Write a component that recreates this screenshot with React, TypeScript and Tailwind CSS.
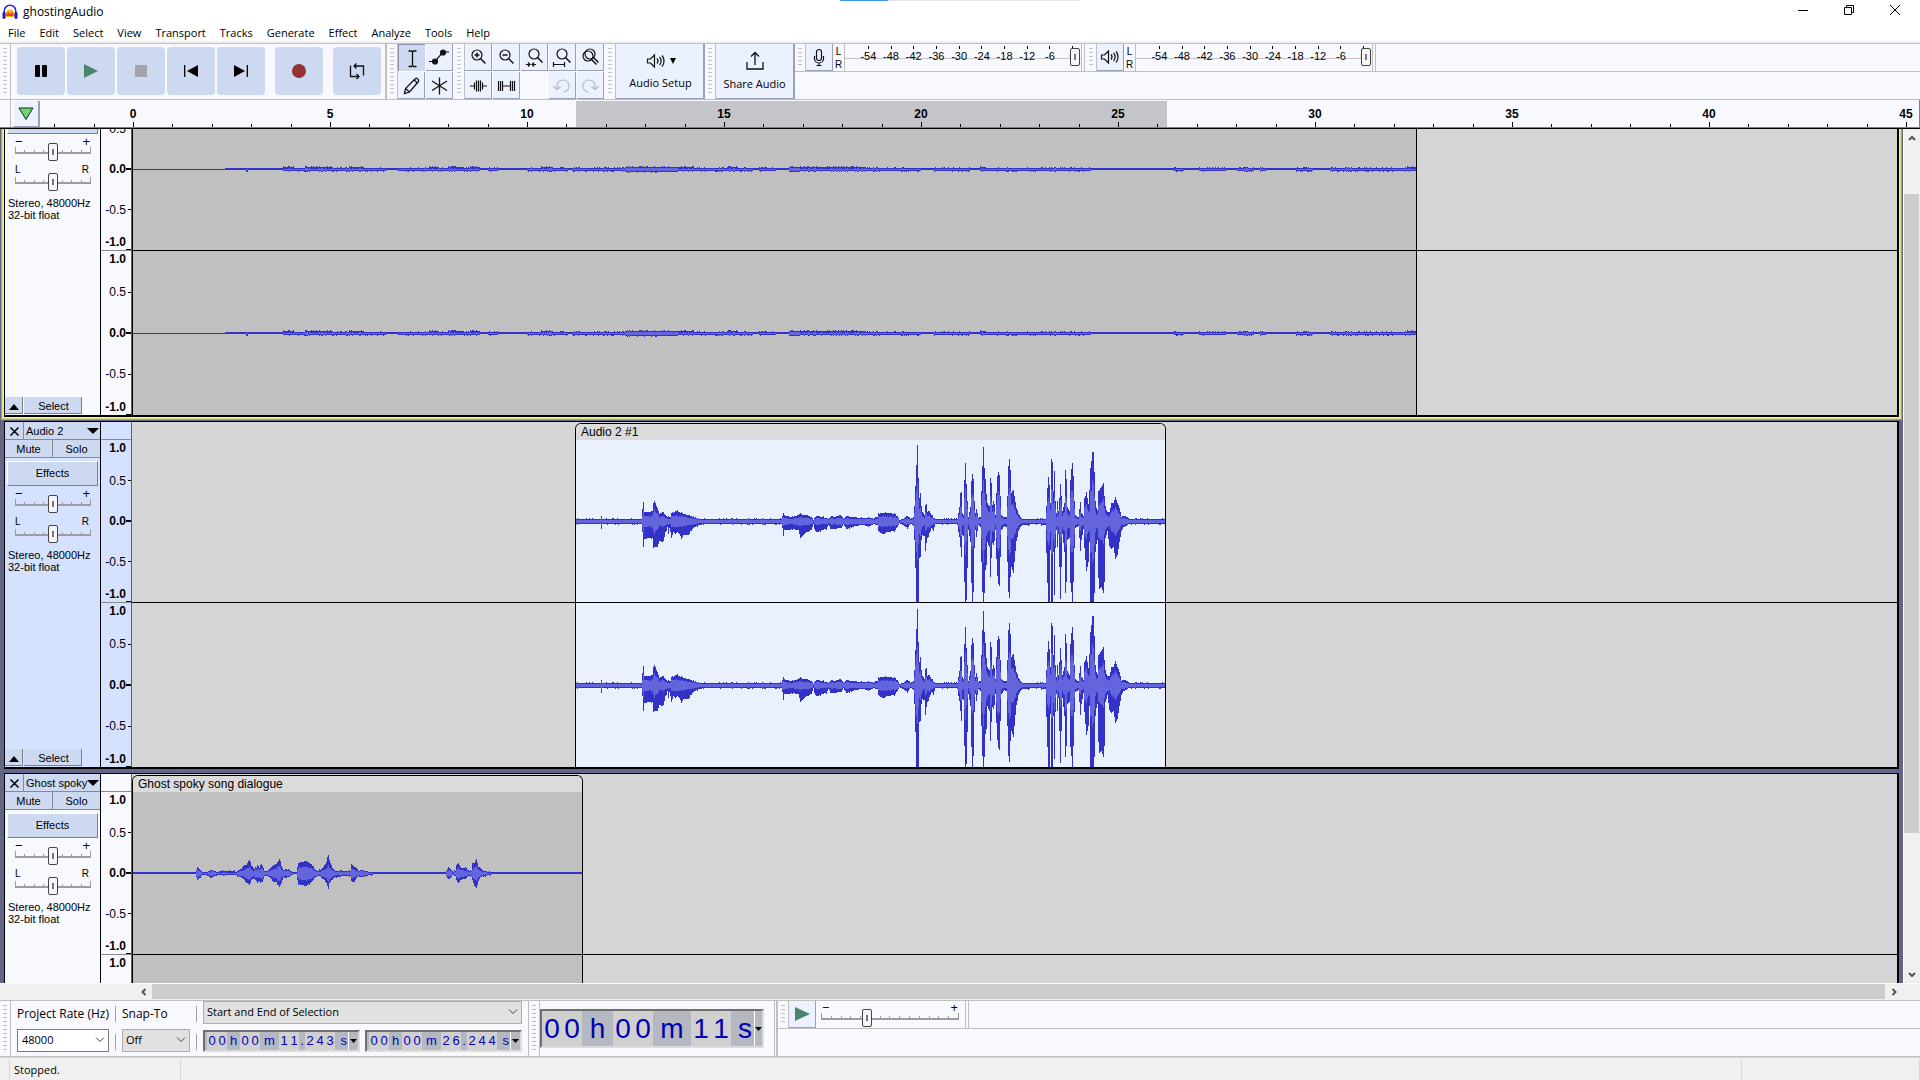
import { useMemo, useState } from "react";
import type { ReactNode } from "react";

const PX_PER_SEC = 39.4;
const MENUS = ["File", "Edit", "Select", "View", "Transport", "Tracks", "Generate", "Effect", "Analyze", "Tools", "Help"];
const DB_MARKS = [-54, -48, -42, -36, -30, -24, -18, -12, -6, 0];

// x offset, peak above centre, peak below centre
type Peak = [number, number, number];

const SPEECH: Peak[] = [
  [0,2,2],[24,2,2],[25,5,7],[26,2,2],[65,2,2],[66,12,10],[67,19,24],[68,9,17],[73,9,16],[76,10,16],[77,18,25],[78,20,25],[81,13,25],
  [83,7,18],[85,8,20],[87,9,19],[89,5,10],[91,4,5],[92,5,11],[93,4,6],[94,4,10],[95,8,16],[97,8,10],[99,10,12],[101,10,10],[104,8,13],
  [105,8,17],[107,7,13],[110,6,13],[112,6,12],[114,5,9],[118,3,5],[122,2,3],[128,2,2],[205,2,2],[206,5,6],[207,7,14],[208,5,8],[217,4,7],
  [222,6,8],[224,8,16],[226,6,13],[230,6,10],[235,4,8],[237,1,2],[239,4,9],[241,5,10],[245,4,8],[250,3,7],[252,2,3],[255,4,7],[265,5,6],
  [267,2,2],[270,5,7],[275,4,5],[285,3,3],[294,3,4],[297,2,2],[301,4,3],[302,7,9],[306,8,12],[311,8,10],[318,7,9],[321,4,5],[323,1,1],
  [327,2,3],[331,5,6],[334,2,2],[337,3,3],[338,15,18],[339,34,46],[340,55,81],[341,76,81],[342,43,81],[343,23,35],[344,28,35],[345,15,18],
  [346,9,13],[348,6,14],[349,16,29],[350,17,20],[351,9,16],[353,10,11],[355,6,6],[357,3,8],[359,2,2],[381,2,2],[383,14,15],[384,28,25],
  [385,29,35],[386,8,12],[387,5,14],[388,41,60],[389,58,82],[390,37,78],[391,20,46],[392,4,7],[394,14,20],[395,40,60],[396,47,82],
  [397,42,70],[398,20,25],[399,8,8],[400,12,15],[402,3,3],[404,4,5],[405,30,40],[406,55,70],[407,74,82],[408,52,71],[409,42,48],
  [410,27,42],[411,18,20],[413,14,25],[414,43,55],[415,38,36],[416,15,20],[417,20,22],[418,17,18],[419,6,8],[420,28,37],[421,45,54],
  [422,49,62],[423,46,64],[424,25,35],[425,6,8],[428,3,4],[430,4,5],[431,25,40],[432,55,70],[433,62,75],[434,51,55],[435,28,45],[437,31,51],
  [438,25,40],[440,13,18],[442,7,9],[445,2,3],[460,2,2],[469,2,3],[470,15,30],[471,33,60],[472,43,82],[473,36,82],[474,18,27],[475,61,82],
  [476,59,82],[477,30,30],[478,50,72],[479,20,25],[480,8,8],[481,20,25],[482,10,12],[484,36,77],[485,25,45],[486,10,12],[488,18,30],
  [489,50,71],[490,42,60],[491,14,18],[493,10,16],[494,40,60],[495,52,70],[496,57,81],[497,45,60],[498,20,26],[499,5,6],[502,4,4],
  [504,19,28],[505,8,18],[507,5,7],[508,22,26],[510,28,49],[512,17,40],[513,30,20],[514,52,82],[515,60,82],[516,69,82],[517,69,82],
  [518,49,70],[519,20,30],[520,13,22],[521,10,18],[522,30,55],[523,31,66],[525,34,65],[527,38,71],[528,25,60],[529,14,16],[531,8,9],
  [533,9,24],[535,17,27],[537,18,25],[539,24,37],[541,18,33],[543,13,20],[545,4,9],[547,5,5],[549,5,4],[552,2,2],[592,2,2],
];

const DIALOGUE: Peak[] = [
  [0,1,0],[62,1,0],[63,3,3],[64,6,6],[67,3,3],[69,1,1],[73,1,1],[78,3,4],[81,2,2],[83,1,1],[88,2,1],[100,2,1],[103,1,1],[106,3,3],[109,5,4],
  [111,8,6],[113,8,8],[115,12,10],[116,13,11],[118,7,6],[121,4,4],[123,5,7],[124,8,9],[126,5,7],[127,8,8],[129,7,8],[131,2,2],[134,2,2],
  [137,5,4],[140,8,8],[143,9,8],[146,14,13],[148,7,9],[150,2,3],[152,4,4],[156,2,2],[160,1,0],[163,1,0],[164,6,6],[165,10,10],[168,11,11],
  [173,12,11],[176,10,10],[179,7,7],[181,4,4],[184,2,2],[187,3,2],[190,6,5],[193,11,9],[195,18,15],[196,13,9],[199,5,5],[202,2,3],
  [212,2,2],[217,2,2],[218,9,7],[221,6,8],[223,5,4],[225,2,2],[228,3,3],[232,2,2],[236,1,1],[242,1,0],[312,1,0],[313,2,2],[315,5,5],
  [317,4,4],[319,1,1],[322,2,2],[323,8,6],[325,10,9],[327,6,6],[330,4,5],[332,6,5],[335,2,2],[338,2,2],[339,9,6],[341,10,12],[343,14,14],
  [345,6,7],[347,5,3],[350,2,2],[356,1,1],[358,1,0],[450,1,0],
];

function noise(n: number) {
  const s = Math.sin(n * 12.9898) * 43758.5453;
  return s - Math.floor(s);
}

// Room tone: short blocks that hover around one or two pixels
function buildAmbience(): Peak[] {
  const out: Peak[] = [[0, 0, 0], [91, 0, 0], [92, 1, 0], [112, 1, 0], [113, 1, 1], [115, 1, 0], [149, 1, 0]];
  let x = 150;
  while (x < 1280) {
    const n = noise(x);
    const len = 4 + Math.floor(noise(x + 7) * 14);
    const loud = (x > 480 && x < 550) || (x > 655 && x < 730);
    const quiet = (x > 610 && x < 650) || (x > 960 && x < 1150);
    let level: [number, number] = n < 0.2 ? [1, 0] : n < 0.85 ? [1, 1] : [2, 1];
    if (loud) level = n < 0.5 ? [2, 2] : [2, 1];
    if (quiet) level = n < 0.6 ? [1, 0] : [1, 1];
    out.push([x, level[0], level[1]], [x + len - 1, level[0], level[1]]);
    x += len;
  }
  out.push([1290, 1, 1]);
  return out;
}

const AMBIENCE = buildAmbience();

function buildWave(peaks: Peak[], width: number, mid: number, jitter: number) {
  let outer = "";
  let inner = "";
  let i = 0;
  for (let x = 0; x < width; x++) {
    while (i < peaks.length - 2 && peaks[i + 1][0] <= x) i++;
    const [x0, u0, d0] = peaks[i];
    const [x1, u1, d1] = peaks[i + 1];
    const t = Math.min(1, (x - x0) / (x1 - x0));
    let up = Math.round(u0 + (u1 - u0) * t);
    let down = Math.round(d0 + (d1 - d0) * t);
    if (up > 0 && down > 0) {
      if (noise(x) > 1 - jitter) up += 1;
      if (noise(x + 999) > 1 - jitter) down += 1;
    }
    outer += `M${x} ${mid - up}h1v${up + down + 1}h-1z`;
    const low = Math.min(up, down);
    const rms = low <= 3 ? low - 1 : Math.max(2, Math.round(low * (0.48 + noise(x + 50) * 0.12)));
    if (rms >= 0 && up > 0 && down > 0) inner += `M${x} ${mid - rms}h1v${rms * 2 + 1}h-1z`;
  }
  return { outer, inner };
}

function Wave({ peaks, width, height, jitter }: { peaks: Peak[]; width: number; height: number; jitter: number }) {
  const wave = useMemo(() => buildWave(peaks, width, height / 2, jitter), [peaks, width, height, jitter]);
  return (
    <svg width={width} height={height} shapeRendering="crispEdges" className="block">
      <path d={wave.outer} fill="#3232c8" />
      <path d={wave.inner} fill="#6464dc" />
    </svg>
  );
}

// ── Small controls ───────────────────────────────────────────────────────────

const Grip = () => (
  <div className="flex w-[11px] shrink-0 justify-center border-r border-[#bfbfbf] py-1">
    <div className="w-1 bg-[repeating-linear-gradient(#bfbfbf_0_1px,transparent_1px_4px)]" />
  </div>
);

function ToolButton({ label, pressed, disabled, children }: { label: string; pressed?: boolean; disabled?: boolean; children: ReactNode }) {
  return (
    <button type="button" aria-label={label} disabled={disabled}
      className={pressed
        ? "flex h-[27px] w-[27px] items-center justify-center border-t border-l border-[#8a90a5] bg-[#cdd9f1]"
        : "flex h-[27px] w-[27px] items-center justify-center border-r border-b border-[#9aa0b4] bg-[#ebf1ff]"}>
      {children}
    </button>
  );
}

const BigButton = ({ label, children }: { label: string; children: ReactNode }) => (
  <button type="button" aria-label={label} className="flex h-12 w-12 items-center justify-center rounded bg-[#cdd9f1]">
    {children}
  </button>
);

const Icon = ({ children, size = 20 }: { children: ReactNode; size?: number }) => (
  <svg width={size} height={size} viewBox={`0 0 ${size} ${size}`} fill="none" stroke="#111" strokeWidth="1.2">{children}</svg>
);

const THUMB =
  "[&::-webkit-slider-thumb]:appearance-none [&::-webkit-slider-thumb]:h-[18px] [&::-webkit-slider-thumb]:w-[10px] [&::-webkit-slider-thumb]:rounded-[2px] [&::-webkit-slider-thumb]:border [&::-webkit-slider-thumb]:border-[#444] [&::-webkit-slider-thumb]:bg-[#f4f6fa] [&::-webkit-slider-thumb]:bg-[linear-gradient(#777,#777)] [&::-webkit-slider-thumb]:bg-[length:2px_6px] [&::-webkit-slider-thumb]:bg-center [&::-webkit-slider-thumb]:bg-no-repeat";

function Slider({ label, initial, ticks }: { label: string; initial: number; ticks: number }) {
  const [value, setValue] = useState(initial);
  return (
    <div className="relative h-[18px]">
      <div className="absolute inset-x-0 top-[4px] flex h-[7px] items-end justify-between border-b-2 border-[#9c9c9c]">
        {Array.from({ length: ticks }, (_, i) => (
          <span key={i} className={i === 0 || i === ticks - 1 ? "h-[5px] w-px bg-[#9c9c9c]" : "h-[2px] w-px bg-[#9c9c9c]"} />
        ))}
      </div>
      <input type="range" aria-label={label} value={value} onChange={e => setValue(Number(e.target.value))}
        className={`absolute inset-0 h-[18px] w-full appearance-none bg-transparent ${THUMB}`} />
    </div>
  );
}

// ── Icons ────────────────────────────────────────────────────────────────────

const AppIcon = () => (
  <svg width="16" height="16" viewBox="0 0 16 16">
    <path d="M3 11.500c0-3 2-6 5-6s5 3 5 6l-1 1.500H4z" fill="#f7b21a" />
    <path d="M4 12l2-4 2 2 2-2 2 4z" fill="#e8421c" />
    <path d="M2.200 9V7a5.800 5.800 0 0 1 11.600 0v2" fill="none" stroke="#2424dc" strokeWidth="1.500" />
    <rect x="0.500" y="8" width="3" height="7" rx="1.400" fill="#1a1ad8" />
    <rect x="12.500" y="8" width="3" height="7" rx="1.400" fill="#1a1ad8" />
  </svg>
);

const Speaker = () => (
  <g>
    <path d="M1.500 8h3l4-4v12l-4-4h-3z" />
    <path d="M11 7.500c1.300 1.500 1.300 3.500 0 5M13.500 6c2 2.400 2 5.600 0 8M16 4.500c2.700 3.200 2.700 7.800 0 11" />
  </g>
);

const Lens = ({ cx = 9, cy = 8 }: { cx?: number; cy?: number }) => (
  <g>
    <circle cx={cx} cy={cy} r="5" />
    <path d={`M${cx + 3.5} ${cy + 3.5}l5 5`} strokeWidth="1.5" />
  </g>
);

const Chevron = ({ dir }: { dir: "up" | "down" | "left" | "right" }) => {
  const d = { up: "M2 7l3-3 3 3", down: "M2 3l3 3 3-3", left: "M6.500 2l-3 3 3 3", right: "M3.500 2l3 3-3 3" }[dir];
  return <svg width="10" height="10" viewBox="0 0 10 10" fill="none" stroke="#555" strokeWidth="2"><path d={d} /></svg>;
};

// ── Toolbars ─────────────────────────────────────────────────────────────────

function Meter({ label, icon }: { label: string; icon: ReactNode }) {
  return (
    <div className="flex h-[27px]">
      <Grip />
      <ToolButton label={label}>{icon}</ToolButton>
      <div className="flex w-[11px] flex-col items-center pt-px text-[10px] leading-[13px]">
        <span>L</span>
        <span>R</span>
      </div>
      <div className="relative w-[237px] border-l border-[#bfbfbf]">
        <div className="absolute inset-x-0 top-[14px] h-px bg-[#c4c4c4]" />
        <div className="relative ml-3 flex w-[227px]">
          {DB_MARKS.map(db => (
            <div key={db} className="flex min-w-0 flex-1 flex-col items-center pt-[2px]">
              <span className="h-[3px] w-px bg-black" />
              <span className="text-[11px] leading-[15px]">{db}</span>
            </div>
          ))}
        </div>
        <input type="range" aria-label={`${label} level`} defaultValue={100}
          className={`absolute top-[4px] right-px h-[18px] w-[11px] appearance-none bg-transparent ${THUMB}`} />
      </div>
      <div className="mr-px w-1 border-x border-[#bfbfbf]" />
    </div>
  );
}

function TopToolbars() {
  return (
    <div className="flex h-[57px] shrink-0 border-y border-[#bfbfbf] bg-[#f8f9ff]">
      <div className="flex border-r-2 border-[#bfbfbf]">
        <Grip />
        <div className="flex items-start gap-[2px] pt-[3px] pr-1 pl-[6px]">
          <BigButton label="Pause">
            <svg width="12" height="12"><rect width="5" height="12" rx="1" /><rect x="7" width="5" height="12" rx="1" /></svg>
          </BigButton>
          <BigButton label="Play"><svg width="14" height="14"><path d="M0 0l14 7-14 7z" fill="#48876b" /></svg></BigButton>
          <BigButton label="Stop"><svg width="12" height="12"><rect width="12" height="12" fill="#a0a4ab" /></svg></BigButton>
          <BigButton label="Skip to start"><svg width="14" height="14"><path d="M0 1h1.300v12H0zM14 1v12L3 7z" /></svg></BigButton>
          <BigButton label="Skip to end"><svg width="14" height="14"><path d="M12.700 1H14v12h-1.300zM0 1l11 6-11 6z" /></svg></BigButton>
          <div className="ml-2 flex gap-[10px]">
            <BigButton label="Record"><svg width="14" height="14"><circle cx="7" cy="7" r="7" fill="#973232" /></svg></BigButton>
            <BigButton label="Loop">
              <Icon size={18}>
                <path d="M2.500 3.500v11H11M15.500 13.500V4H6M8.500 1.500L6 4l2.500 2.500M8.500 12l2.500 2.500L8.500 17" strokeWidth="1.300" />
              </Icon>
            </BigButton>
          </div>
        </div>
      </div>

      <Grip />
      <div className="grid grid-cols-2 gap-px pr-px">
        <ToolButton label="Selection tool" pressed><Icon><path d="M6.500 3h3l1 1 1-1h3M6.500 18.500h3l1-1 1 1h3M10.500 4v13.500" strokeWidth="1.300" /></Icon></ToolButton>
        <ToolButton label="Envelope tool">
          <Icon><path d="M0 14.500h6L14 5h6" /><circle cx="6" cy="14.500" r="2.500" fill="#111" /><circle cx="14" cy="5.500" r="2.500" fill="#111" /></Icon>
        </ToolButton>
        <ToolButton label="Draw tool"><Icon><path d="M3.500 18.500l1-5L14.500 3.500c1-1 4 1.500 3 3L8.500 17zM4.500 13.500l4 3.500M13 5l3.500 3" strokeWidth="1.300" /></Icon></ToolButton>
        <ToolButton label="Multi-tool"><Icon><path d="M10.500 2.500v17M3 6l15 9.500M18 6L3 15.500" strokeWidth="1.300" /></Icon></ToolButton>
      </div>

      <Grip />
      <div className="grid grid-cols-5 gap-px pr-px">
        <ToolButton label="Zoom in"><Icon><Lens /><path d="M6.500 8h5M9 5.500v5" strokeWidth="1.500" /></Icon></ToolButton>
        <ToolButton label="Zoom out"><Icon><Lens /><path d="M6.500 8h5" strokeWidth="1.500" /></Icon></ToolButton>
        <ToolButton label="Fit selection"><Icon><Lens cx={10} cy={7} /><path d="M2 17.500h4M8 17.500h4M4 15.500l2 2-2 2M10 15.500l-2 2 2 2" /></Icon></ToolButton>
        <ToolButton label="Fit project"><Icon><Lens cx={10} cy={7} /><path d="M1.500 15v5M12.500 15v5M2 17.500h10" /></Icon></ToolButton>
        <ToolButton label="Zoom toggle"><Icon><Lens cx={8} cy={9} /><Lens cx={10} cy={7} /></Icon></ToolButton>
        <ToolButton label="Trim outside selection"><Icon><path d="M2 11h4M15 11h4M6.500 7.500v7M8.500 5.500v11M10.500 5.500v11M12.500 5.500v11M14.500 7.500v7" strokeWidth="1.200" /></Icon></ToolButton>
        <ToolButton label="Silence selection"><Icon><path d="M2.500 6v10M4.500 6v10M6.500 6v10M7 11h7M14.500 6v10M16.500 6v10M18.500 6v10" strokeWidth="1.200" /></Icon></ToolButton>
        <span />
        <ToolButton label="Undo" disabled><Icon><path d="M5 14.500V11a6 6 0 1 1 8.500 5.500l-1.500 1M1.500 11.500l3.500 3 3.500-3" stroke="#b3b8c6" /></Icon></ToolButton>
        <ToolButton label="Redo" disabled><Icon><path d="M15 14.500V11a6 6 0 1 0-8.500 5.500l1.500 1M18.500 11.500l-3.500 3-3.500-3" stroke="#b3b8c6" /></Icon></ToolButton>
      </div>

      <Grip />
      <button type="button" className="flex w-[89px] flex-col items-center justify-center gap-1 border-r-2 border-b border-[#9aa0b4] bg-[#ebf1ff] pl-[2px] font-['Open_Sans',sans-serif] text-[11px] leading-4">
        <span className="flex items-center gap-1">
          <Icon size={20}><Speaker /></Icon>
          <svg width="6" height="6"><path d="M0 0h6L3 6z" /></svg>
        </span>
        Audio Setup
      </button>
      <Grip />
      <button type="button" className="flex w-[79px] flex-col items-center justify-center gap-1 border-r-2 border-b border-[#9aa0b4] bg-[#ebf1ff] font-['Open_Sans',sans-serif] text-[11px] leading-4">
        <Icon size={22}><path d="M3 12v7h16v-7M11 15V2.500M7 6.500l4-4 4 4" strokeWidth="1.300" /></Icon>
        Share Audio
      </button>

      <div className="min-w-0 flex-1">
        <div className="flex h-7 border-b border-[#bfbfbf]">
          <Meter label="Record meter"
            icon={<Icon><rect x="7.500" y="2.500" width="5" height="11" rx="2.500" /><path d="M5.500 9v2.500a4.500 4.500 0 0 0 9 0V9M10 16v2M7.500 18.500h5" /></Icon>} />
          <Meter label="Playback meter" icon={<Icon size={20}><Speaker /></Icon>} />
        </div>
      </div>
    </div>
  );
}

function Timeline() {
  const seconds = Array.from({ length: 48 }, (_, i) => i - 2);
  return (
    <div className="flex h-[29px] shrink-0 border-b border-black bg-[#f8f9ff]">
      <div className="flex min-w-0 flex-1 border-r border-b border-[#808080] border-r-[#808080]">
        <div className="w-[11px] border-r border-[#bfbfbf]" />
        <button type="button" aria-label="Pinned play head"
          className="mt-px ml-[3px] flex w-[26px] items-center justify-center border-r-2 border-b border-[#9aa0b4] bg-[#ebf1ff]">
          <svg width="16" height="14"><path d="M1 1h14L8 12.500z" fill="#6fd66f" stroke="#222" /></svg>
        </button>
        <svg className="h-full min-w-0 flex-1" shapeRendering="crispEdges">
          <rect x={93 + 11.243 * PX_PER_SEC} y="1" width={15.001 * PX_PER_SEC} height="27" fill="#c4c5cb" />
          {seconds.map(s => {
            const x = Math.round(93 + s * PX_PER_SEC);
            const major = s % 5 === 0;
            return (
              <g key={s}>
                <rect x={x} y={major ? 22 : 24} width="1" height={major ? 5 : 3} />
                {major && s >= 0 && (
                  <text x={x} y="18" textAnchor="middle" className="text-[12px] font-bold">{s}</text>
                )}
              </g>
            );
          })}
        </svg>
      </div>
    </div>
  );
}

// ── Tracks ───────────────────────────────────────────────────────────────────

type TrackData = {
  name: string;
  clip: string;
  start: number;
  length: number;
  peaks: Peak[];
  jitter: number;
  selected?: boolean;
  focused?: boolean;
};

const TRACKS: TrackData[] = [
  { name: "Audio 1", clip: "Audio 1 #1", start: 0, length: 32.6, peaks: AMBIENCE, jitter: 0.22, focused: true },
  { name: "Audio 2", clip: "Audio 2 #1", start: 11.243, length: 14.98, peaks: SPEECH, jitter: 0.15, selected: true },
  { name: "Ghost spoky", clip: "Ghost spoky song dialogue", start: 0, length: 11.43, peaks: DIALOGUE, jitter: 0.12 },
];

function Scale() {
  const rows: [string, boolean][] = [["1.0", true], ["0.5", false], ["0.0", true], ["-0.5", false], ["-1.0", true]];
  return (
    <div className="grid h-full grid-rows-[16px_1fr_32px_1fr_16px]">
      {rows.map(([text, bold]) => (
        <div key={text} className="flex items-center justify-end text-[12px] leading-4">
          <span className={bold ? "font-bold" : ""}>{text}</span>
          {text === "0.0" && <span className="h-[2px] w-[5px] bg-black" />}
          {!bold && <span className="ml-[2px] h-px w-[3px] bg-black" />}
          {text === "1.0" && <span className="w-[5px]" />}
          {text === "-1.0" && <span className="h-px w-[5px] self-end bg-black" />}
        </div>
      ))}
    </div>
  );
}

function Track({ track }: { track: TrackData }) {
  const panel = track.selected ? "bg-[#d5e2ff]" : "bg-[#f8f9ff]";
  const width = Math.round(track.length * PX_PER_SEC);
  return (
    <section
      className={track.focused
        ? "mr-1 mb-1 ml-1 flex h-[348px] shrink-0 border border-r-2 border-b-2 border-black shadow-[0_0_0_1px_#f5f58c,0_0_0_2px_#dcdc82,0_0_0_3px_#a5a58c]"
        : "mr-1 mb-1 ml-1 flex h-[348px] shrink-0 border border-r-2 border-b-2 border-black"}>
      {/* Control panel */}
      <div className={`flex w-24 shrink-0 flex-col border-r border-black text-[11px] ${panel}`}>
        <div className="flex h-[18px] border-b border-[#8a8a8a] bg-[#cdd9f1]">
          <button type="button" aria-label="Close track" className="flex w-[19px] items-center justify-center border-r border-[#8a8a8a] pt-px">
            <svg width="9" height="9" stroke="#000" strokeWidth="1.500"><path d="M0.500 0.500l8 8M8.500 0.500l-8 8" /></svg>
          </button>
          <button type="button" className="flex min-w-0 flex-1 items-center justify-between pt-px pr-px pl-[2px]">
            <span className="w-0 flex-1 text-left whitespace-nowrap">{track.name}</span>
            <svg width="12" height="6" className="relative shrink-0"><path d="M0 0h12L6 6z" /></svg>
          </button>
        </div>
        <div className="flex h-[18px] border-b border-[#8a8a8a] bg-[#cdd9f1]">
          <button type="button" className="w-12 border-r border-[#8a8a8a] pt-px">Mute</button>
          <button type="button" className="flex-1 pt-px">Solo</button>
        </div>
        <button type="button" className="mx-[2px] mt-[3px] h-[25px] border border-t-white border-r-[#808080] border-b-[#808080] border-l-white bg-[#cdd9f1]">Effects</button>

        <div className="mt-[6px] mr-[9px] ml-[10px]">
          <div className="flex h-[3px] items-center justify-between pr-px text-[13px]"><span>−</span><span>+</span></div>
          <Slider label={`${track.name} gain`} initial={50} ticks={9} />
          <div className="mt-1 flex h-2 items-center justify-between pr-[2px] text-[10px]"><span>L</span><span>R</span></div>
          <Slider label={`${track.name} pan`} initial={50} ticks={9} />
        </div>

        <p className="mt-[6px] ml-[3px] leading-3 whitespace-nowrap">Stereo, 48000Hz<br />32-bit float</p>

        <div className="mt-auto flex h-[18px] gap-px pb-px">
          <button type="button" aria-label="Collapse track" className="flex w-[18px] items-center justify-center border-r border-b border-[#808080] bg-[#cdd9f1] pt-1">
            <svg width="10" height="6"><path d="M0 6h10L5 0z" /></svg>
          </button>
          <button type="button" className="w-[58px] border-r border-b border-[#808080] bg-[#cdd9f1] pt-px pl-[2px]">Select</button>
        </div>
      </div>

      {/* Vertical scale */}
      <div className={`flex w-[31px] shrink-0 flex-col border-r border-[#606060] ${panel}`}>
        <div className="h-[18px] shrink-0 border-b border-[#8a8a8a]" />
        <div className="h-[162px] shrink-0"><Scale /></div>
        <div className="h-px shrink-0 bg-[#8a8a8a]" />
        <div className="h-[164px] shrink-0"><Scale /></div>
      </div>

      {/* Clip lane */}
      <div className="relative min-w-0 flex-1 overflow-hidden bg-[#d6d6d6] pt-px">
        <div
          className={`h-full overflow-hidden rounded-t-[6px] border border-b-0 border-black ${track.selected ? "bg-[#e9f1ff]" : "bg-[#c0c0c0]"}`}
          style={{ marginLeft: Math.round(track.start * PX_PER_SEC), width: width + 1 }}>
          <h2 className="h-4 bg-[#dbdbdb] pl-[5px] text-[12px] leading-4">{track.clip}</h2>
          <Wave peaks={track.peaks} width={width} height={162} jitter={track.jitter} />
          <div className="h-px" />
          <Wave peaks={track.peaks} width={width} height={164} jitter={track.jitter} />
        </div>
        <div className="absolute inset-x-0 top-[180px] h-px bg-black" />
      </div>
    </section>
  );
}

function VerticalBar() {
  return (
    <div className="flex w-[17px] shrink-0 flex-col items-center border-l border-white bg-[#f0f0f0]">
      <button type="button" aria-label="Scroll up" className="flex h-[17px] items-center"><Chevron dir="up" /></button>
      <div className="flex w-full flex-1 flex-col">
        <div className="h-12" />
        <div className="mr-px flex-[640_1_0%] bg-[#cdcdcd]" />
        <div className="flex-[133_1_0%]" />
      </div>
      <button type="button" aria-label="Scroll down" className="flex h-[17px] items-center"><Chevron dir="down" /></button>
    </div>
  );
}

// ── Bottom dock ──────────────────────────────────────────────────────────────

const SelectBox = ({ label, options, className }: { label: string; options: string[]; className: string }) => (
  <div className={`relative flex h-[23px] ${className}`}>
    <select aria-label={label} className="w-full appearance-none border border-inherit bg-transparent pl-[3px] text-[11px]">
      {options.map(o => <option key={o}>{o}</option>)}
    </select>
    <svg width="10" height="6" fill="none" stroke="#444" className="pointer-events-none absolute top-2 right-1"><path d="M1 0.500l4 4 4-4" /></svg>
  </div>
);

// Each group of digits sits on a light cell, units sit on the darker field
function TimeField({ label, parts, big }: { label: string; parts: string[]; big?: boolean }) {
  return (
    <div role="group" aria-label={label}
      className={big
        ? "flex h-[39px] border-2 border-[#707070] border-r-[#dcdcdc] border-b-[#dcdcdc] bg-[#b4b8c1] font-['Liberation_Sans',Arial,sans-serif] text-[28px] text-[#0000b4]"
        : "flex h-[22px] w-[157px] border-2 border-[#707070] border-r-[#dcdcdc] border-b-[#dcdcdc] bg-[#b4b8c1] pl-[2px] font-['Liberation_Sans',Arial,sans-serif] text-[13px] text-[#0000b4]"}>
      {parts.map((part, i) => {
        const digits = /^\d+$/.test(part);
        if (digits) {
          return (
            <span key={i} className="flex bg-[#d0d0d0]">
              {part.split("").map((c, j) => (
                <span key={j} className={big ? "flex w-5 items-center justify-center" : "flex w-[10px] items-center justify-center"}>{c}</span>
              ))}
            </span>
          );
        }
        if (part === ".") return <span key={i} className="flex w-[6px] items-center justify-center">.</span>;
        const wide = part === "m";
        return (
          <span key={i} className={big
            ? (wide ? "flex w-[38px] items-center justify-center" : part === "s" ? "flex w-[23px] items-center justify-end pr-[2px]" : "flex w-[31px] items-center justify-center")
            : (wide ? "flex w-[19px] items-center justify-center" : part === "s" ? "flex w-[13px] items-center justify-end pr-px" : "flex w-[13px] items-center justify-center")}>
            {part}
          </span>
        );
      })}
      <button type="button" aria-label={`${label} format`} className="flex flex-1 items-center justify-center border-l border-white">
        <svg width="7" height="4"><path d="M0 0h7L3.500 4z" /></svg>
      </button>
    </div>
  );
}

function BottomToolbars() {
  return (
    <div className="flex h-[57px] shrink-0 border-y border-[#bfbfbf] bg-[#f8f9ff] font-['Open_Sans',sans-serif] text-[11px]">
      <Grip />
      <div className="flex gap-[6px] px-[6px]">
        <div className="flex w-[92px] flex-col justify-between pt-[5px] pb-1">
          <label htmlFor="rate" className="text-[12px] leading-4 whitespace-nowrap">Project Rate (Hz)</label>
          <div className="relative flex h-[23px]">
            <input id="rate" defaultValue="48000" className="w-full border border-[#7a7a7a] bg-white pl-1" />
            <svg width="10" height="6" fill="none" stroke="#444" className="absolute top-2 right-1"><path d="M1 0.500l4 4 4-4" /></svg>
          </div>
        </div>
        <div className="flex flex-col justify-between pt-[5px] pb-[6px]">
          <span className="h-4 w-px bg-[#a0a0a0]" /><span className="h-4 w-px bg-[#a0a0a0]" />
        </div>
        <div className="flex w-[68px] flex-col justify-between pt-[5px] pb-1">
          <span className="text-[12px] leading-4">Snap-To</span>
          <SelectBox label="Snap-To" options={["Off", "Nearest", "Prior"]} className="border-[#adadad] bg-[#e1e1e1]" />
        </div>
        <div className="flex flex-col justify-between pt-[5px] pb-[6px]">
          <span className="h-4 w-px bg-[#a0a0a0]" /><span className="h-4 w-px bg-[#a0a0a0]" />
        </div>
        <div className="flex flex-col justify-between pb-1">
          <SelectBox label="Selection mode" options={["Start and End of Selection", "Start and Length of Selection"]} className="border-[#adadad] bg-[#e1e1e1]" />
          <div className="flex gap-[5px]">
            <TimeField label="Selection start" parts={["00", "h", "00", "m", "11", ".", "243", "s"]} />
            <TimeField label="Selection end" parts={["00", "h", "00", "m", "26", ".", "244", "s"]} />
          </div>
        </div>
      </div>

      <div className="flex border-r border-l border-[#bfbfbf]">
        <Grip />
        <div className="flex items-center pr-[10px]">
          <TimeField big label="Audio position" parts={["00", "h", "00", "m", "11", "s"]} />
        </div>
      </div>
      <div className="w-[3px] border-r-2 border-[#bfbfbf]" />

      <div className="min-w-0 flex-1">
        <div className="flex h-7 border-b border-[#bfbfbf]">
          <Grip />
          <button type="button" aria-label="Play at speed" className="flex h-[27px] w-[27px] items-center justify-center border-r border-b border-[#9aa0b4] bg-[#ebf1ff]">
            <svg width="15" height="14"><path d="M0 0l15 7-15 7z" fill="#48876b" /></svg>
          </button>
          <div className="ml-[5px] w-[138px] pt-[6px]">
            <div className="flex h-[2px] items-center justify-between px-px text-[13px]"><span>−</span><span>+</span></div>
            <Slider label="Playback speed" initial={32} ticks={15} />
          </div>
          <div className="ml-[6px] w-1 border-x border-[#bfbfbf]" />
        </div>
      </div>
    </div>
  );
}

export default function App() {
  return (
    <div className="flex h-screen flex-col overflow-hidden bg-white font-['Liberation_Sans',Arial,sans-serif] text-black">
      {/* Title bar */}
      <header className="relative flex h-6 shrink-0 items-center pr-5 pl-[2px] font-['Open_Sans',sans-serif]">
        <AppIcon />
        <h1 className="ml-[5px] flex-1 text-[12px] leading-4">ghostingAudio</h1>
        <div className="absolute top-0 left-[840px] flex h-px w-60 bg-[#e5e5e5]"><span className="w-12 bg-[#3c96f0]" /></div>
        <div className="mb-1 flex gap-9">
          <button type="button" aria-label="Minimize"><svg width="10" height="10" stroke="#000"><path d="M0 5.500h10" /></svg></button>
          <button type="button" aria-label="Restore"><svg width="10" height="10" fill="none" stroke="#000"><path d="M0.500 2.500h7v7h-7zM2.500 2.500v-2h7v7h-2" /></svg></button>
          <button type="button" aria-label="Close"><svg width="10" height="10" stroke="#000"><path d="M0 0l10 10M10 0L0 10" /></svg></button>
        </div>
      </header>
      <nav className="flex h-[19px] shrink-0 items-center border-b-2 border-[#f0f0f0] pl-px font-['Open_Sans',sans-serif] text-[11px] leading-4">
        {MENUS.map(m => <button key={m} type="button" className="px-[7px]">{m}</button>)}
      </nav>

      <TopToolbars />
      <Timeline />

      {/* Track area */}
      <main className="flex min-h-0 flex-1">
        <div className="min-w-0 flex-1 overflow-hidden bg-[#646689]">
          <div className="-mt-[60px] flex flex-col">
            {TRACKS.map(t => <Track key={t.name} track={t} />)}
          </div>
        </div>
        <VerticalBar />
      </main>
      <div className="flex h-[17px] shrink-0 items-center border-t border-white bg-[#f0f0f0] pr-[17px] pl-[135px]">
        <button type="button" aria-label="Scroll left" className="flex w-[17px] justify-center"><Chevron dir="left" /></button>
        <div className="h-[15px] flex-1 self-start bg-[#cdcdcd]" />
        <button type="button" aria-label="Scroll right" className="flex w-[18px] justify-center"><Chevron dir="right" /></button>
      </div>

      <BottomToolbars />

      <footer className="flex h-[23px] shrink-0 border-t border-[#d7d7d7] bg-[#f0f0f0] pt-px pl-[9px] font-['Open_Sans',sans-serif] text-[11px] leading-[22px]">
        <span className="w-[172px] border-x border-[#d7d7d7] pl-1">Stopped.</span>
        <span className="flex-1" />
        <span className="w-[179px] border-x border-[#d7d7d7]" />
      </footer>
    </div>
  );
}
